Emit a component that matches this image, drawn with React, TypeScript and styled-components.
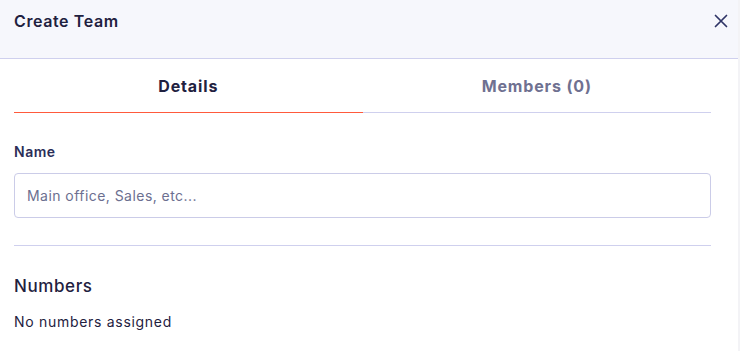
import styled, { createGlobalStyle } from "styled-components"

const GlobalStyle = createGlobalStyle`
  body {
    margin: 0;
    background: #ffffff;
    font-family: Inter, "Noto Sans", sans-serif;
  }
`

const TABS = [
  { label: "Details", active: true },
  { label: "Members (0)", active: false },
]

export default function App() {
  return (
    <Panel>
      <GlobalStyle />
      <Header>
        <Title>Create Team</Title>
        <CloseButton aria-label="Close">
          <svg width="14" height="14" viewBox="0 0 14 14">
            <path d="M1.5 1.5 L12.5 12.5 M12.5 1.5 L1.5 12.5" stroke="#2e3466" strokeWidth="1.7" strokeLinecap="round" />
          </svg>
        </CloseButton>
      </Header>
      <Body>
        <Tabs>
          {TABS.map(t => (
            <Tab key={t.label} $active={t.active}>{t.label}</Tab>
          ))}
        </Tabs>
        <Label>Name</Label>
        <Input placeholder="Main office, Sales, etc..." />
        <Divider />
        <SectionTitle>Numbers</SectionTitle>
        <Muted>No numbers assigned</Muted>
      </Body>
    </Panel>
  )
}

const Panel = styled.div`
  width: 738px;
  height: 351px;
  background: #ffffff;
  border-right: 2px solid #f3f3f6;
  overflow: hidden;
`

const Header = styled.div`
  display: flex;
  align-items: center;
  justify-content: space-between;
  box-sizing: border-box;
  height: 59px;
  padding: 0 10px 16px 14px;
  background: #f6f7fc;
  border-bottom: 1px solid #cfd0ee;
`

const Title = styled.h1`
  margin: 0;
  font-size: 16px;
  font-weight: 600;
  letter-spacing: 0.6px;
  color: #1f2140;
`

const CloseButton = styled.button`
  display: flex;
  padding: 0;
  border: none;
  background: none;
  cursor: pointer;
`

const Body = styled.div`
  padding: 0 27px 0 14px;
  display: flex;
  flex-direction: column;
`

const Tabs = styled.div`
  display: flex;
`

const Tab = styled.div<{ $active: boolean }>`
  flex: 1;
  height: 54px;
  display: flex;
  align-items: center;
  justify-content: center;
  box-sizing: border-box;
  padding-top: 1px;
  font-size: 16px;
  font-weight: 700;
  letter-spacing: 0.85px;
  color: ${p => (p.$active ? "#1f2140" : "#6f7191")};
  border-bottom: ${p => (p.$active ? "1.5px solid #ff5a3c" : "1px solid #cfd0ee")};
`

const Label = styled.label`
  margin-top: 30px;
  font-size: 14px;
  font-weight: 600;
  line-height: 17px;
  letter-spacing: 0.5px;
  color: #2b2e58;
`

const Input = styled.input`
  margin-top: 13px;
  height: 45px;
  box-sizing: border-box;
  padding: 0 12px;
  border: 1px solid #cbcce8;
  border-radius: 4px;
  font-family: inherit;
  font-size: 14px;
  letter-spacing: 0.45px;
  color: #1f2140;
  outline: none;

  &::placeholder {
    color: #6c6f90;
  }
`

const Divider = styled.hr`
  margin: 27px 0 0;
  border: none;
  border-top: 1px solid #cfd0ee;
`

const SectionTitle = styled.h2`
  margin: 30px 0 0;
  font-size: 17px;
  font-weight: 500;
  line-height: 21px;
  letter-spacing: 0.6px;
  color: #1f2140;
`

const Muted = styled.p`
  margin: 16px 0 0;
  font-size: 14px;
  line-height: 17px;
  letter-spacing: 0.7px;
  color: #1f2140;
`
